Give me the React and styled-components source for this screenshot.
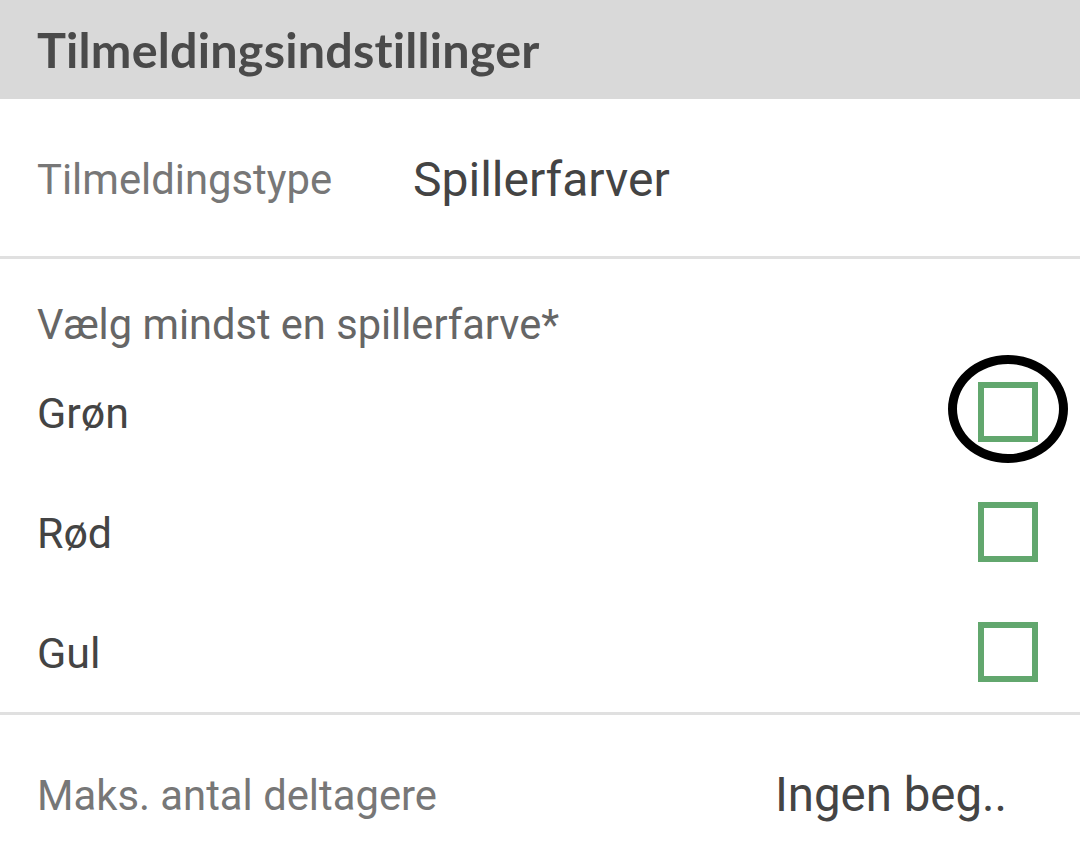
import React from 'react'
import styled, { createGlobalStyle } from 'styled-components';

const GlobalStyle = createGlobalStyle`
  html, body {
    margin: 0;
    padding: 0;
    background: #ffffff;
    font-family: Roboto, 'Noto Sans', sans-serif;
  }
`;

const colors = ['Grøn', 'Rød', 'Gul'];

function App() {
  return (
    <Page>
      <GlobalStyle />
      <Header>
        <h2>Tilmeldingsindstillinger</h2>
      </Header>

      <TypeRow>
        <Label $width="376px">Tilmeldingstype</Label>
        <TypeValue>Spillerfarver</TypeValue>
      </TypeRow>

      <Divider />

      <ColorSection>
        <SectionTitle>Vælg mindst en spillerfarve*</SectionTitle>
        {colors.map((c, i) => (
          <ColorRow key={c}>
            <ColorName>{c}</ColorName>
            <CheckWrap>
              <Checkbox />
              {i === 0 && <Marker />}
            </CheckWrap>
          </ColorRow>
        ))}
      </ColorSection>

      <Divider />

      <MaxRow>
        <Label>Maks. antal deltagere</Label>
        <MaxValue>Ingen beg..</MaxValue>
      </MaxRow>
    </Page>
  );
}

export default App

const Page = styled.div`
  width: 1080px;
  height: 861px;
  overflow: hidden;
  background: #fff;
  display: flex;
  flex-direction: column;
`;

const Header = styled.div`
  height: 99px;
  background: #d9d9d9;
  display: flex;
  align-items: center;
  padding-left: 37px;

  h2 {
    margin: 0 0 2px;
    font-family: Lato, 'Liberation Sans', sans-serif;
    font-weight: 700;
    font-size: 48.5px;
    color: #4a4a4a;
    letter-spacing: 0.2px;
  }
`;

const TypeRow = styled.div`
  height: 157px;
  display: flex;
  align-items: center;
  padding: 4px 0 0 37px;
  box-sizing: border-box;
`;

const Label = styled.span`
  font-size: 41.8px;
  color: #777777;
  white-space: nowrap;
  width: ${(p) => p.$width || 'auto'};
`;

const TypeValue = styled.span`
  font-size: 48px;
  color: #444444;
`;

const Divider = styled.div`
  height: 3px;
  background: #e0e0e0;
`;

const ColorSection = styled.div`
  height: 453px;
  padding: 42px 0 0 37px;
  box-sizing: border-box;
`;

const SectionTitle = styled.div`
  font-size: 41.6px;
  color: #666666;
  line-height: 48px;
  margin-bottom: 30px;
`;

const ColorRow = styled.div`
  height: 120px;
  display: flex;
  align-items: flex-start;
  justify-content: space-between;
  padding-right: 42px;
`;

const ColorName = styled.span`
  font-size: 43px;
  color: #444444;
  line-height: 50px;
  margin-top: 9px;
`;

const CheckWrap = styled.div`
  position: relative;
  width: 60px;
  height: 60px;
  margin-top: 3px;
`;

const Checkbox = styled.div`
  width: 60px;
  height: 60px;
  box-sizing: border-box;
  border: 6px solid #62a76e;
`;

const Marker = styled.div`
  position: absolute;
  left: -30px;
  top: -27px;
  width: 120px;
  height: 108px;
  box-sizing: border-box;
  border: 9px solid #000;
  border-radius: 50%;
`;

const MaxRow = styled.div`
  flex: 1;
  display: flex;
  align-items: center;
  justify-content: space-between;
  padding: 14px 73px 0 37px;
`;

const MaxValue = styled.span`
  font-size: 47.4px;
  color: #444444;
`;
